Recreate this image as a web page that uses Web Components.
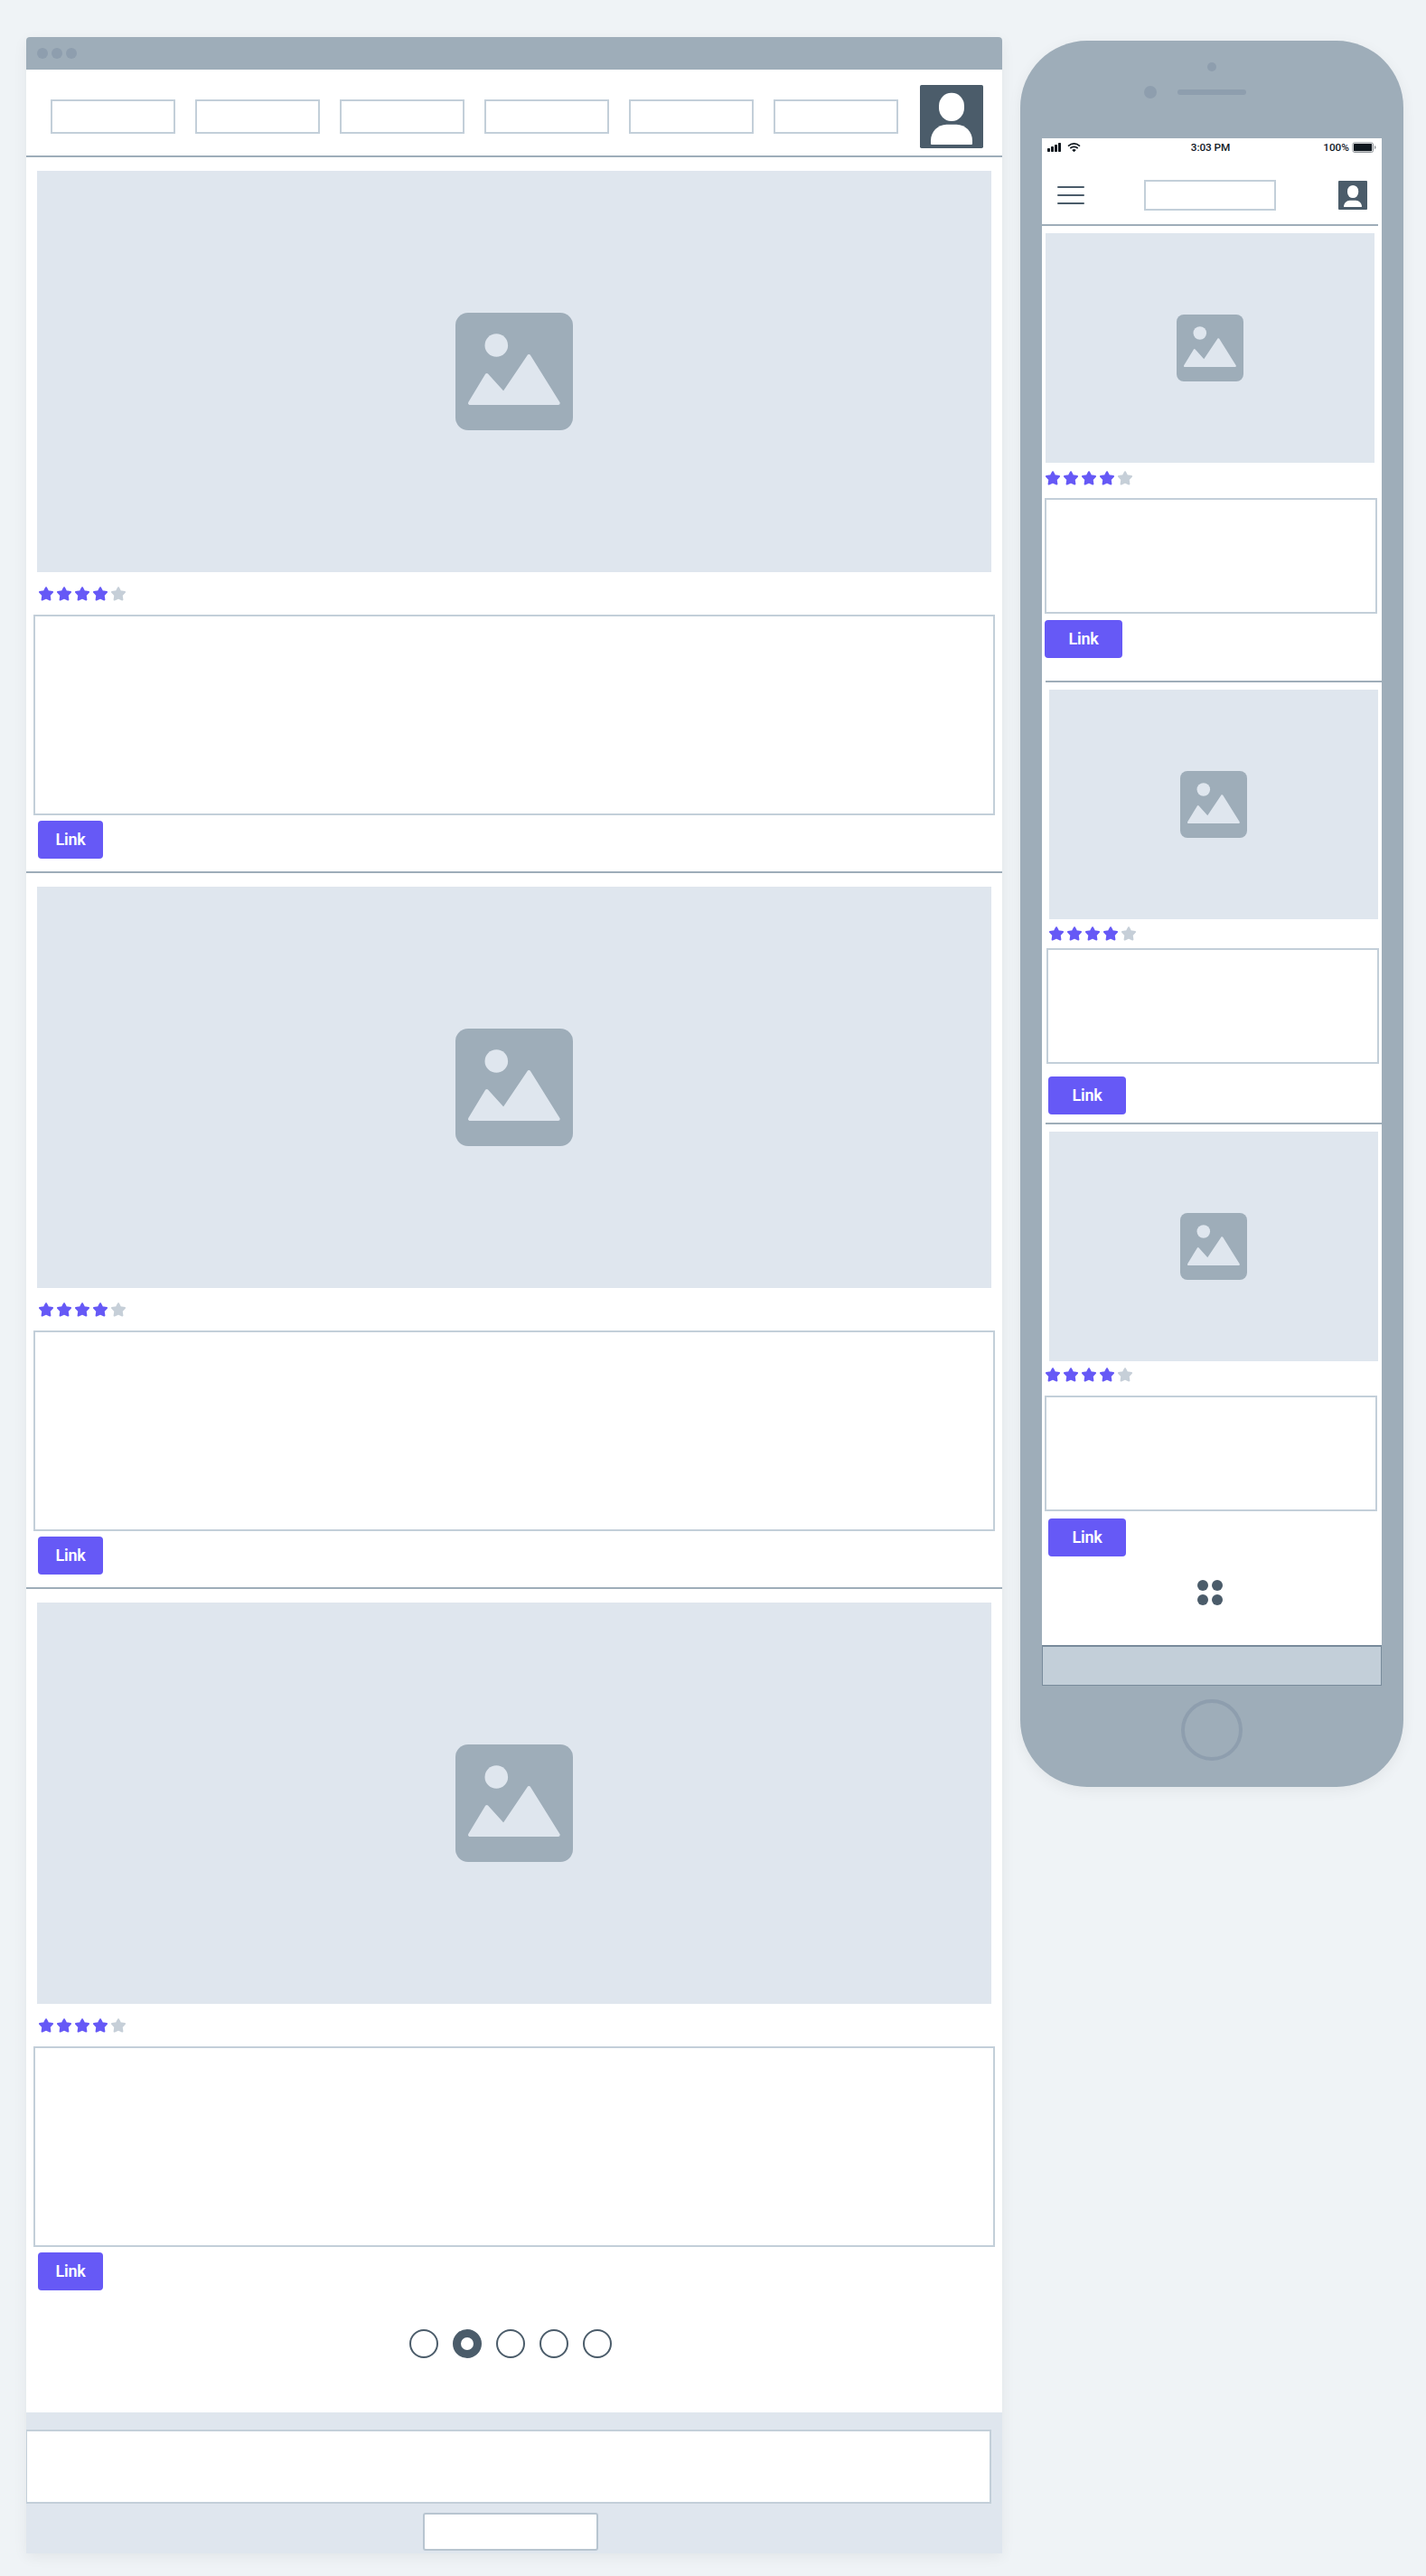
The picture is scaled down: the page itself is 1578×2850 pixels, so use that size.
<!DOCTYPE html>
<html lang="en">
<head>
<meta charset="utf-8">
<title>Wireframe: desktop and mobile</title>
<style>
html,body{margin:0;background:#eff3f6;font-family:Roboto,"Liberation Sans",sans-serif}
</style>
</head>
<body>
<wire-board></wire-board>
<script>
const define = (name, render) => customElements.define(name, class extends HTMLElement {
  connectedCallback() {
    if (this.shadowRoot) return;
    this.attachShadow({mode: 'open'}).innerHTML =
      '<style>*{box-sizing:border-box}:host{display:block;box-sizing:border-box;flex:none}svg{display:block}</style>' + render(this);
  }
});

define('wire-box', () => `<style>:host{border:2px solid #c3cfd9;background:#fff}</style>`);
define('wire-rule', () => `<style>:host{height:2px;background:#9eadb9}</style>`);

define('wire-link', () => `<style>
:host{display:flex;width:72px;height:42px;border-radius:4px;background:#6659f6;color:#fff;align-items:center;justify-content:center;font-size:18px;font-weight:600;line-height:20px;letter-spacing:-.2px}
</style><slot></slot>`);

define('wire-avatar', el => el.hasAttribute('small') ? `
<style>:host{width:32px;height:32px}</style>
<svg width="32" height="32" viewBox="0 0 32 32"><rect width="32" height="32" rx="1" fill="#4b5c6a"/>
<rect x="10" y="5" width="12.2" height="14" rx="6.1" ry="6.4" fill="#fff"/>
<path d="M6 28.6C6 25 9.3 21.8 12.6 21.8H19.4C22.7 21.8 26 25 26 28.6Q26 29 25.6 29H6.4Q6 29 6 28.6Z" fill="#fff"/></svg>` : `
<style>:host{width:70px;height:70px}</style>
<svg width="70" height="70" viewBox="0 0 70 70"><rect width="70" height="70" rx="1.8" fill="#4b5c6a"/>
<rect x="21" y="8.7" width="28" height="31.2" rx="13.6" ry="14.4" fill="#fff"/>
<path d="M12 65V61.5C12 52 19.5 43.7 29.5 43.7H40.5C50.5 43.7 58 52 58 61.5V65Q58 66 57 66H13Q12 66 12 65Z" fill="#fff"/></svg>`);

define('wire-image', () => `<style>
:host{display:flex;align-items:center;justify-content:center;background:#dfe6ee}
svg{width:var(--icon,130px);height:var(--icon,130px)}
</style>
<svg viewBox="0 0 130 130"><rect width="130" height="130" rx="14" fill="#9eadb9"/>
<circle cx="45.3" cy="36" r="12.8" fill="#dfe6ee"/>
<path d="M53.3 89.7L34.7 69L16 100H113.7L81.3 48Z" fill="#dfe6ee" stroke="#dfe6ee" stroke-width="4" stroke-linejoin="round"/></svg>`);

define('wire-stars', () => `<style>:host{display:flex;gap:4px;height:16px}</style>` +
  [0,1,2,3,4].map(i => { const c = i < 4 ? '#6659f6' : '#c6cfd8';
    return `<svg width="16" height="16" viewBox="0 0 16 16"><path d="M8 1.2L10.1 5.2L15 6L11.7 9.6L12.4 14.5L8 12.6L3.6 14.5L4.3 9.6L1 6L5.9 5.2Z" fill="${c}" stroke="${c}" stroke-width="2" stroke-linejoin="round"/></svg>`;
  }).join(''));

define('desktop-card', () => `<style>
:host{height:790px;padding-top:15px}
wire-image{width:1056px;height:444px;margin-left:12px}
wire-stars{margin:16px 0 0 14px}
wire-box{width:1064px;height:222px;margin:15px 0 6px 8px}
wire-link{margin-left:13px}
</style><wire-image></wire-image><wire-stars></wire-stars><wire-box></wire-box><wire-link><slot></slot></wire-link>`);

define('mobile-card', () => `<style>
wire-image{--icon:74px;width:364px;height:254px;margin:var(--image)}
wire-stars{margin:var(--stars)}
wire-box{width:368px;height:128px;margin:var(--box)}
wire-link{width:86px;margin:var(--link)}
</style><wire-image></wire-image><wire-stars></wire-stars><wire-box></wire-box><wire-link><slot></slot></wire-link>`);

define('page-dots', () => `<style>
:host{display:flex;gap:16px;padding-left:424px}
i{width:32px;height:32px;border:2px solid #4b5c6a;border-radius:50%}
i.on{border-width:9px}
</style><i></i><i class="on"></i><i></i><i></i><i></i>`);

define('desktop-window', () => `<style>
:host{width:1080px;height:2784px;background:#fff;border-radius:4px 4px 0 0;box-shadow:0 4px 16px rgba(0,0,0,.06);overflow:hidden}
.bar{height:36px;background:#9eadb9;display:flex;gap:4px;align-items:center;padding-left:12px}
.bar i{width:12px;height:12px;border-radius:50%;background:#8e9eae}
nav{height:95px;padding:0 21px 0 27px;display:flex;align-items:center;gap:22px}
nav wire-box{width:138px;height:38px;margin-top:9px}
nav wire-avatar{margin:9px 0 0 2px}
page-dots{margin:43px 0 60px}
footer{height:156px;background:#dfe6ee;padding-top:19px}
footer .wide{width:1068px;height:82px;border-left-width:1px}
footer .small{width:194px;height:42px;margin:10px 0 0 439px;border-radius:3px;border-color:#b8c5d0}
desktop-card:last-of-type{height:776px}
</style>
<div class="bar"><i></i><i></i><i></i></div>
<nav><wire-box></wire-box><wire-box></wire-box><wire-box></wire-box><wire-box></wire-box><wire-box></wire-box><wire-box></wire-box><wire-avatar></wire-avatar></nav>
<wire-rule></wire-rule><desktop-card>Link</desktop-card>
<wire-rule></wire-rule><desktop-card>Link</desktop-card>
<wire-rule></wire-rule><desktop-card>Link</desktop-card>
<page-dots></page-dots>
<footer><wire-box class="wide"></wire-box><wire-box class="small"></wire-box></footer>`);

define('status-bar', () => `<style>
:host{display:grid;grid-template-columns:1fr auto 1fr;height:20px;padding:0 6px;align-items:center;color:#10181f;font-size:11.8px;font-weight:500;line-height:14px}
.l,.r{display:flex;align-items:center}.l{gap:7px}.r{justify-content:flex-end;gap:3px}
.t{letter-spacing:-.1px;margin-right:3px}
</style>
<div class="l"><svg width="15" height="10" viewBox="0 0 15 10" fill="#10181f"><rect y="6" width="3" height="4" rx=".7"/><rect x="4" y="4" width="3" height="6" rx=".7"/><rect x="8" y="2" width="3" height="8" rx=".7"/><rect x="12" width="3" height="10" rx=".7"/></svg>
<svg width="15" height="10" viewBox="0 0 15 10" fill="none" stroke="#10181f" stroke-width="1.7"><path d="M1 3.6Q7.5-1.7 14 3.6M3.3 6Q7.5 2.7 11.7 6"/><path d="M5.2 8Q7.5 6.2 9.8 8L7.5 10.2Z" fill="#10181f" stroke="none"/></svg></div>
<span class="t">3:03 PM</span>
<div class="r"><span>100%</span><svg width="27" height="12" viewBox="0 0 27 12"><rect x=".9" y=".9" width="22.6" height="10.6" rx="2" fill="none" stroke="#8f9499"/><rect x="2" y="2" width="20.2" height="8.2" rx=".8" fill="#10181f"/><path d="M25 4Q26.6 4.6 26.6 6T25 8Z" fill="#8f9499"/></svg></div>`);

define('phone-frame', () => `<style>
:host{width:424px;height:1932px}
.body{height:100%;border-radius:74px;background:#9eadb9;box-shadow:0 4px 16px rgba(0,0,0,.06);display:flex;flex-direction:column;align-items:center}
.top{height:108px;width:100%;display:flex;flex-direction:column;align-items:center;padding-top:24px}
.top i,.top b{display:block;background:#8e9eae;border-radius:50%}
.cam{width:10px;height:10px}
.ear{display:flex;align-items:center;gap:23px;width:113px;margin:16px 37px 0 0}
.ear i{width:14px;height:14px;flex:none}.ear b{width:76px;height:6px;border-radius:3px;flex:none}
.screen{width:376px;height:1712px;background:#fff;display:flex;flex-direction:column}
.head{height:75px;padding:26px 16px 0 17px;display:flex;align-items:flex-start}
.menu{width:30px;display:flex;flex-direction:column;gap:7px;margin-top:7px}
.menu i{height:2px;background:#4b5c6a;border-radius:1px}
.head wire-box{width:146px;height:34px;margin-left:66px}
.head wire-avatar{margin:1px 0 0 69px}
.r1{width:372px}.r2{width:372px;margin-left:4px}
#a{height:503px;--image:8px 0 9px 4px;--stars:0 0 14px 4px;--box:0 0 7px 3px;--link:0 0 0 3px}
#b{height:487px;--image:8px 0 8px 8px;--stars:0 0 8px 8px;--box:0 0 14px 5px;--link:0 0 0 7px}
#c{height:478px;--image:8px 0 7px 8px;--stars:0 0 15px 4px;--box:0 0 8px 3px;--link:0 0 0 7px}
.dots{display:grid;grid-template-columns:12px 12px;gap:4px;margin:26px 0 0 172px}
.dots i{width:12px;height:12px;border-radius:50%;background:#4b5c6a}
.foot{height:45px;margin-top:auto;background:#c3cfd9;border:1px solid #788b9b;border-top-width:2px}
.home{width:68px;height:68px;border:4px solid #8e9eae;border-radius:50%;margin-top:15px}
</style>
<div class="body">
<div class="top"><i class="cam"></i><div class="ear"><i></i><b></b></div></div>
<div class="screen"><status-bar></status-bar>
<div class="head"><div class="menu"><i></i><i></i><i></i></div><wire-box></wire-box><wire-avatar small></wire-avatar></div>
<wire-rule class="r1"></wire-rule><mobile-card id="a">Link</mobile-card>
<wire-rule class="r2"></wire-rule><mobile-card id="b">Link</mobile-card>
<wire-rule class="r2"></wire-rule><mobile-card id="c">Link</mobile-card>
<div class="dots"><i></i><i></i><i></i><i></i></div>
<div class="foot"></div></div>
<div class="home"></div></div>`);

define('wire-board', () => `<style>
:host{display:flex;align-items:flex-start;gap:20px;width:1578px;height:2850px;padding:41px 0 0 29px;background:#eff3f6;overflow:hidden}
phone-frame{margin-top:4px}
</style><desktop-window></desktop-window><phone-frame></phone-frame>`);
</script>
</body>
</html>
